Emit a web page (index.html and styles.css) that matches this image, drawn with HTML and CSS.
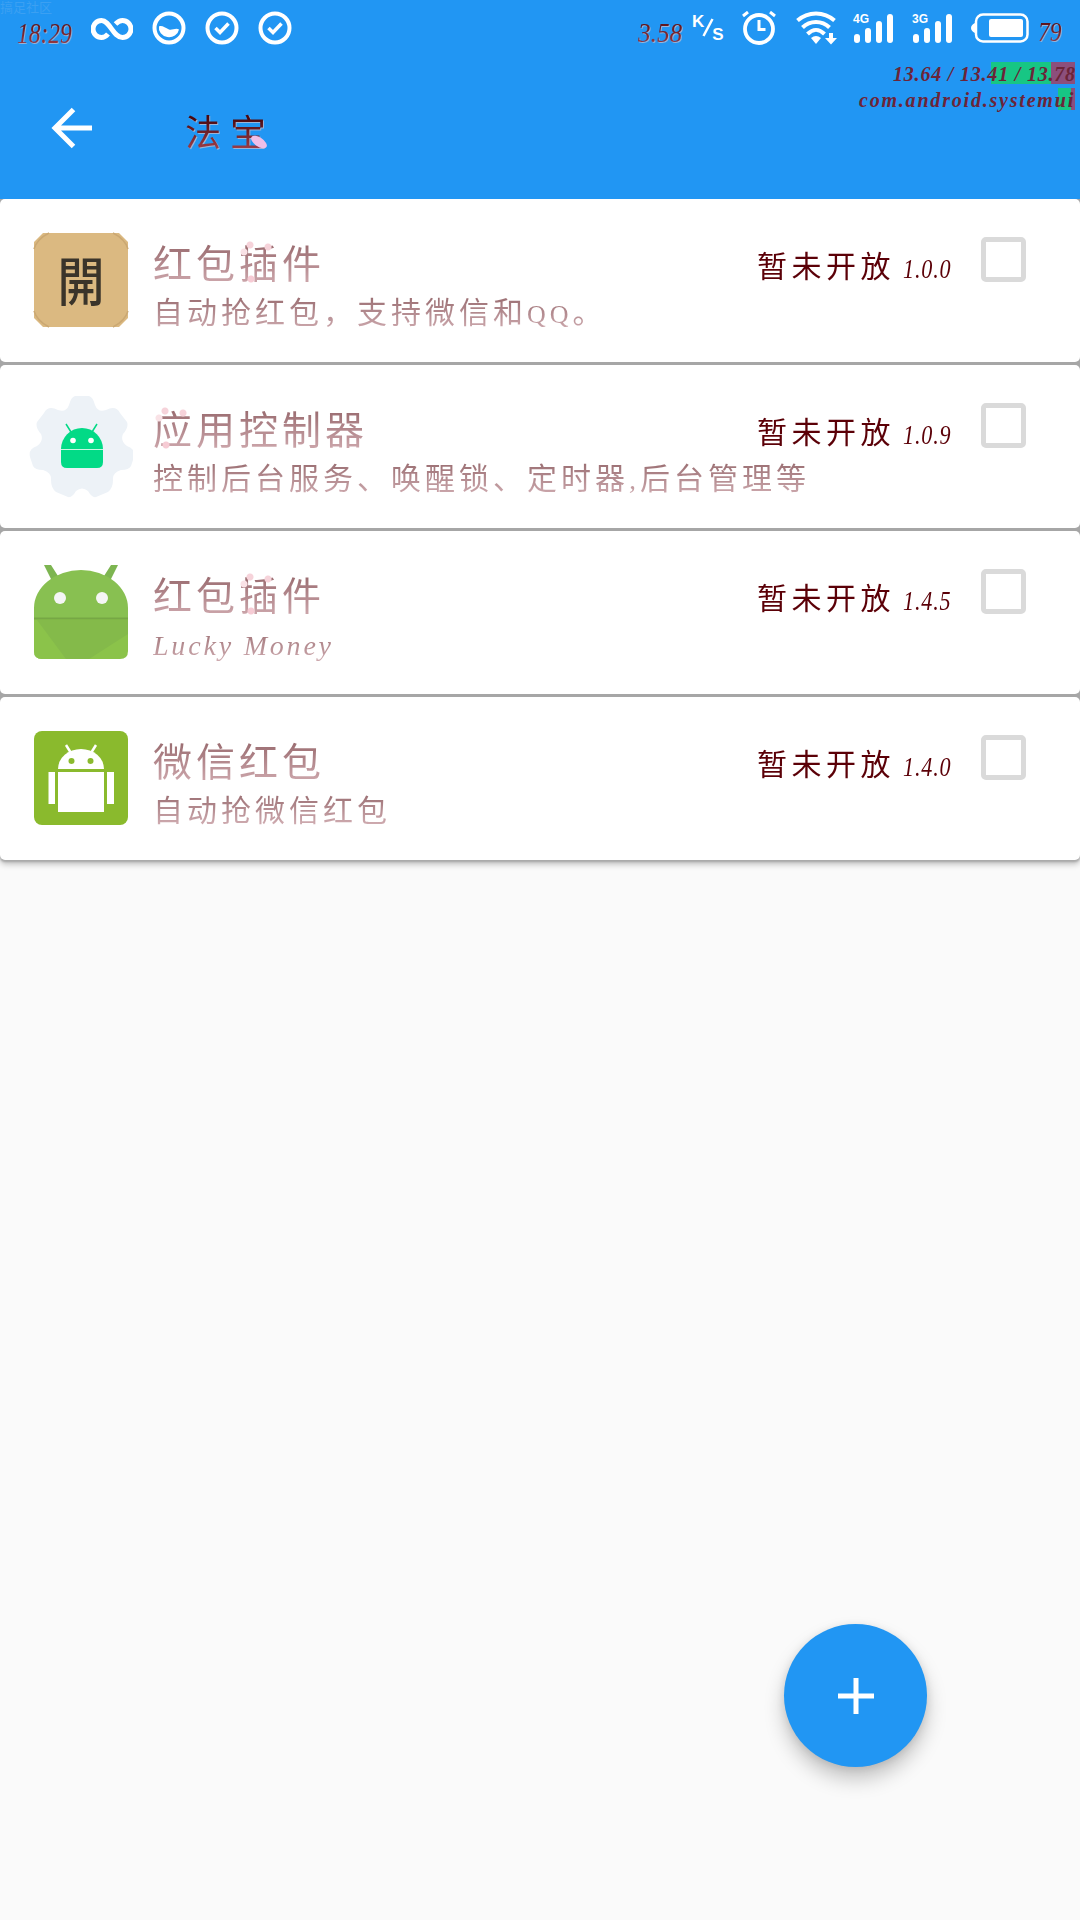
FILE: index.html
```html
<!DOCTYPE html>
<html lang="zh-CN">
<head>
<meta charset="utf-8">
<title>法宝</title>
<link rel="stylesheet" href="styles.css">
</head>
<body>
<div class="screen">
  <header class="header">
    <div class="watermark">搞足社区</div>
    <div class="status">
      <div class="status-left">
        <span class="ink time">18:29</span>
        <svg class="i-inf" width="42" height="24" viewBox="0 0 42 24"><path d="M17 17C14.500 20 12.500 20.500 10.500 20.500A8.500 8.500 0 0 1 10.500 3.500C19 3.500 22 20.500 31.500 20.500A8.500 8.500 0 0 0 31.500 3.500C29 3.500 27 4.500 24.500 7" fill="none" stroke="#fff" stroke-width="5"/></svg>
        <svg class="i-c1" width="34" height="34" viewBox="0 0 34 34"><circle cx="17" cy="17" r="14.500" fill="none" stroke="#fff" stroke-width="4"/><path d="M7 15.500C10 14 13 17 17 18.500C20 19.500 24 16.500 27 18.500A10 9 0 0 1 7 15.500Z" fill="#fff"/></svg>
        <svg class="i-c2" width="34" height="34" viewBox="0 0 34 34"><circle cx="17" cy="17" r="14.500" fill="none" stroke="#fff" stroke-width="4"/><path d="M10.500 17l4.500 4.500 8.500-9" fill="none" stroke="#fff" stroke-width="3.500"/></svg>
        <svg class="i-c2" width="34" height="34" viewBox="0 0 34 34"><circle cx="17" cy="17" r="14.500" fill="none" stroke="#fff" stroke-width="4"/><path d="M10.500 17l4.500 4.500 8.500-9" fill="none" stroke="#fff" stroke-width="3.500"/></svg>
      </div>
      <div class="status-right">
        <span class="ink speed">3.58</span>
        <span class="unit"><span>K</span><svg width="12" height="20" viewBox="0 0 12 20"><path d="M10.500 1L1.500 18" stroke="#fff" stroke-width="2.500"/></svg><span class="unit-s">S</span></span>
        <svg class="i-alarm" width="34" height="34" viewBox="0 0 34 34"><circle cx="17" cy="18" r="14" fill="none" stroke="#fff" stroke-width="3.800"/><path d="M17 9v9.500h6.500" fill="none" stroke="#fff" stroke-width="3"/><path d="M1 5L6 1M33 5L28 1" stroke="#fff" stroke-width="3"/></svg>
        <svg class="i-wifi" width="42" height="34" viewBox="0 0 42 34"><g fill="none" stroke="#fff" stroke-width="4"><path d="M1.500 9.500C12 0 28 0 38.500 9.500"/><path d="M6.500 16.500C14 9 26 9 33.500 16.500"/><path d="M11.500 23C17 17.500 23 17.500 28.500 23"/></g><path d="M15 27Q20 23 25 27L20 33Z" fill="#fff"/><path d="M33 22h4v5h4l-6 6.500-6-6.500h4z" fill="#fff"/></svg>
        <span class="cell"><svg width="42" height="32" viewBox="0 0 42 32"><g fill="#fff"><rect x="1" y="21" width="6" height="9" rx="3"/><rect x="12" y="15" width="6" height="15" rx="3"/><rect x="23" y="8" width="6" height="22" rx="3"/><rect x="34" y="1" width="6" height="29" rx="3"/></g></svg><b>4G</b></span>
        <span class="cell cell2"><svg width="42" height="32" viewBox="0 0 42 32"><g fill="#fff"><rect x="1" y="21" width="6" height="9" rx="3"/><rect x="12" y="15" width="6" height="15" rx="3"/><rect x="23" y="8" width="6" height="22" rx="3"/><rect x="34" y="1" width="6" height="29" rx="3"/></g></svg><b>3G</b></span>
        <svg class="i-bat" width="58" height="30" viewBox="0 0 58 30"><rect x="5" y="1.500" width="51.500" height="27" rx="7" fill="none" stroke="#fff" stroke-width="2.500"/><path d="M4 10Q0 12 0 15T4 20Z" fill="#fff"/><rect x="18" y="6" width="34" height="18" rx="2" fill="#fff"/></svg>
        <span class="ink pct">79</span>
      </div>
    </div>
    <div class="toolbar">
      <svg class="back" width="42" height="42" viewBox="0 0 42 42"><path d="M41 21H5M22.500 2.500L4 21L22.500 39.500" fill="none" stroke="#fff" stroke-width="5"/></svg>
      <h1 class="ink title">法宝</h1>
      <svg class="petal" width="18" height="16" viewBox="0 0 18 16"><ellipse cx="9" cy="8" rx="9" ry="4.500" transform="rotate(34 9 8)" fill="#eebee8"/></svg>
    </div>
    <div class="load">
      <div class="load-row load-a"><span>13.64 / 13.41 / 13.78</span></div>
      <div class="load-row load-b"><span>com.android.systemui</span></div>
    </div>
  </header>

  <main class="list">
    <article class="card">
      <svg class="icon" width="104" height="104" viewBox="0 0 104 104"><path d="M14 5H90L99 14V90L90 99H14L5 90V14Z" fill="#dbb981"/><path d="M5 21Q8 11 20 5M84 5Q96 11 99 21M5 83Q8 93 20 99M84 99Q96 93 99 83" fill="none" stroke="#cba872" stroke-width="1.500"/><text class="kai" transform="translate(52 73) scale(1 1.120)" text-anchor="middle">開</text></svg>
      <div class="info"><h2 class="petals p3">红包插件</h2><p>自动抢红包，支持微信和<i class="qq">QQ</i>。</p></div>
      <div class="state"><span>暂未开放</span><i>1.0.0</i></div>
      <span class="box"></span>
    </article>
    <article class="card">
      <svg class="icon" width="104" height="104" viewBox="0 0 104 104"><g transform="translate(1 2)"><path d="M45 0H59Q63 1 65 9Q68 17 76 14Q86 9 90 17L97 26Q99 31 93 38Q90 45 97 50Q106 53 104 61L101 70Q99 74 91 74Q82 77 83 84Q83 92 78 96L66 101Q62 102 58 95Q52 90 46 95Q42 102 38 101L26 96Q21 92 21 84Q22 77 13 74Q5 74 3 70L0 61Q-2 53 7 50Q14 45 11 38Q5 31 7 26L14 17Q18 9 28 14Q36 17 39 9Q41 1 45 0Z" fill="#edf2f7"/><path d="M31 53A21 21 0 0 1 73 53V66Q73 72 67 72H37Q31 72 31 66Z" fill="#02da86"/><path d="M36 28l5 8M67 28l-5 8" stroke="#02da86" stroke-width="1.500"/><path d="M31 53.500H73" stroke="#c8f7e2" stroke-width="1"/><circle cx="43" cy="44.500" r="2.800" fill="#fff"/><circle cx="61" cy="44.500" r="2.800" fill="#fff"/></g></svg>
      <div class="info"><h2 class="petals p1">应用控制器</h2><p>控制后台服务、唤醒锁、定时器<i class="comma">,</i>后台管理等</p></div>
      <div class="state"><span>暂未开放</span><i>1.0.9</i></div>
      <span class="box"></span>
    </article>
    <article class="card">
      <svg class="icon" width="104" height="104" viewBox="0 0 104 104"><path d="M15 5h7l7 11-5 7zM89 5h-7l-7 11 5 7z" fill="#7db551"/><path d="M5 48H99V91Q99 99 91 99H13Q5 99 5 91Z" fill="#8bc34a"/><path d="M5 58V48A47 38 0 0 1 99 48V58Z" fill="#88c051"/><path d="M5 58H10L38 99H13Q5 99 5 91Z" fill="#8bc34a"/><path d="M8 60H99V74L60 99H37Z" fill="#84ba4a"/><path d="M5 58.500H99" stroke="#76a745" stroke-width="2"/><circle cx="31" cy="38" r="6" fill="#f5f5f5"/><circle cx="73" cy="38" r="6" fill="#f5f5f5"/></svg>
      <div class="info"><h2 class="petals p3">红包插件</h2><p class="latin"><i>Lucky Money</i></p></div>
      <div class="state"><span>暂未开放</span><i>1.4.5</i></div>
      <span class="box"></span>
    </article>
    <article class="card">
      <svg class="icon" width="104" height="104" viewBox="0 0 104 104"><rect x="5" y="5" width="94" height="94" rx="8" fill="#8aba2d"/><path d="M29 43A23 20 0 0 1 75 43Z" fill="#fff"/><path d="M37 19l5 8M67 19l-5 8" stroke="#fff" stroke-width="2.500"/><circle cx="42.500" cy="35" r="3" fill="#8aba2d"/><circle cx="61.500" cy="35" r="3" fill="#8aba2d"/><path d="M29 46H75V86H29ZM19.500 46H26V78H19.500ZM78 46H85V78H78Z" fill="#fff"/></svg>
      <div class="info"><h2>微信红包</h2><p>自动抢微信红包</p></div>
      <div class="state"><span>暂未开放</span><i>1.4.0</i></div>
      <span class="box"></span>
    </article>
  </main>

  <button class="fab" aria-label="添加"><svg width="36" height="36" viewBox="0 0 36 36"><path d="M18 0V36M0 18H36" stroke="#fff" stroke-width="5"/></svg></button>
</div>
</body>
</html>
```
FILE: styles.css
```css
* { box-sizing: border-box; margin: 0; padding: 0; }

body {
  width: 1080px;
  height: 1920px;
  overflow: hidden;
  background: #fafafa;
  font-family: "Liberation Serif", "Noto Sans CJK SC", sans-serif;
}

svg { display: block; flex: none; }

.screen { position: relative; width: 1080px; height: 1920px; }

.header { position: relative; height: 199px; background: #2196f3; }

.watermark {
  position: absolute;
  left: 0;
  top: 0;
  font: 13px/13px "Noto Sans CJK SC", sans-serif;
  color: #3ba0f2;
}

.ink {
  color: transparent;
  background: linear-gradient(#4a0910 30%, #a8434e 90%);
  -webkit-background-clip: text;
  background-clip: text;
  filter: drop-shadow(1px 1px 0 #9bb4d8);
  white-space: nowrap;
}

.status { display: flex; justify-content: space-between; height: 56px; }
.status-left, .status-right { display: flex; }
.status-left { padding-left: 17px; }

.time { width: 74px; font: italic 30px/33px "Liberation Serif", serif; padding-top: 16px; transform: scaleX(.78); transform-origin: 0 0; }
.i-inf { margin-top: 17px; }
.i-c1 { margin: 11px 0 0 19px; }
.i-c2 { margin: 11px 0 0 19px; }

.status-right { width: 442px; }
.speed { width: 51px; font: italic 28px/33px "Liberation Serif", serif; padding-top: 16px; transform: scaleX(.9); transform-origin: 0 0; }
.unit { display: flex; width: 36px; margin-left: 3px; color: #fff; font: bold 17px/17px "Liberation Sans", sans-serif; padding-top: 13px; }
.unit svg { margin: 5px -2px 0 -2px; }
.unit-s { margin-top: 13px; }
.i-alarm { margin: 11px 0 0 14px; }
.i-wifi { margin: 11px 0 0 20px; }
.cell { position: relative; margin: 13px 0 0 15px; }
.cell2 { margin-left: 17px; }
.cell b { position: absolute; left: 0; top: 0; color: #fff; font: bold 12px/13px "Liberation Sans", sans-serif; }
.i-bat { margin: 13px 0 0 17px; }
.pct { font: italic 28px/33px "Liberation Serif", serif; padding: 15px 3px 0 0; margin-left: 9px; transform: scaleX(.84); transform-origin: 0 0; }

.toolbar { display: flex; padding-left: 51px; }
.back { margin-top: 51px; }
.title { margin: 46px 0 0 92px; font: 36px/56px "Noto Sans CJK SC", sans-serif; letter-spacing: 9px; }
.petal { margin: 78px 0 0 -25px; z-index: 1; }

.load {
  position: absolute;
  right: 5px;
  top: 62px;
  display: flex;
  flex-direction: column;
  align-items: flex-end;
  gap: 4px;
  color: #6c2438;
  font: italic bold 20px/24px "Liberation Serif", serif;
  white-space: nowrap;
}
.load-row { height: 22px; text-align: right; }
.load-a { width: 182px; background: linear-gradient(90deg, transparent 98px, #17c684 98px, #17c684 158px, #8c4f7c 158px); letter-spacing: .8px; }
.load-b { width: 218px; background: linear-gradient(90deg, transparent 201px, #17c684 201px, #17c684 214px, #8c4f7c 214px); letter-spacing: 1.800px; }

.list { display: flex; flex-direction: column; gap: 3px; background: #a6a6a6; box-shadow: 0 2px 2px #aaa, 0 4px 6px rgba(0, 0, 0, .25); border-radius: 0 0 5px 5px; }

.card {
  display: flex;
  height: 163px;
  padding-left: 29px;
  border-radius: 5px;
  background: #fff;
}

.icon { margin-top: 29px; }
.kai { font: 500 47px "Noto Sans CJK TC", sans-serif; fill: #3a342a; }

.info { width: 600px; margin-left: 20px; padding-top: 34px; white-space: nowrap; }
.info h2, .info p, .state span, .state i {
  color: transparent;
  -webkit-background-clip: text;
  background-clip: text;
}
.info h2 {
  width: max-content;
  font: 400 39px/56px "Noto Sans CJK SC", sans-serif;
  letter-spacing: 4px;
  background-image: linear-gradient(#9a6c70 20%, #c9a2a7 85%);
}
.info p {
  width: max-content;
  margin-top: -1px;
  font: 400 30px/44px "Noto Sans CJK SC", sans-serif;
  letter-spacing: 4px;
  background-image: linear-gradient(#9c7074 20%, #cda9ae 85%);
}
.info p i { font-family: "Liberation Serif", serif; font-size: 28px; }
.info .qq { font-style: normal; font-size: 26px; }
.info .comma { letter-spacing: 4px; }
.info .latin i { font-size: 28px; letter-spacing: 2.800px; }

.petals { position: relative; }
.petals::after {
  content: "";
  position: absolute;
  top: 7px;
  width: 34px;
  height: 44px;
  background:
    radial-gradient(circle at 10px 5px, #f6d3da 3px, transparent 4px),
    radial-gradient(circle at 28px 7px, #f6d3da 3px, transparent 4px),
    radial-gradient(circle at 4px 12px, #f9e2e6 3px, transparent 4px),
    radial-gradient(circle at 11px 39px, #f6cbd4 3px, transparent 4px);
}
.p3::after { left: 87px; }
.p1::after { left: 2px; }

.state { display: flex; width: 198px; justify-content: flex-end; white-space: nowrap; padding-top: 43px; }
.state span {
  font: 30px/44px "Noto Sans CJK SC", sans-serif;
  letter-spacing: 4.500px;
  background-image: linear-gradient(#5b0007 30%, #94505c 85%);
}
.state i {
  width: 60px;
  margin: 0 -12px 0 8px;
  font: italic 27px/54px "Liberation Serif", serif;
  letter-spacing: 1px;
  transform: scaleX(.82);
  transform-origin: 0 0;
  background-image: linear-gradient(#5b0007 30%, #94505c 75%);
}

.box { width: 45px; height: 45px; margin: 38px 0 0 30px; border: 5px solid #dadada; border-radius: 5px; }

.fab {
  position: absolute;
  left: 784px;
  top: 1624px;
  display: flex;
  align-items: center;
  justify-content: center;
  width: 143px;
  height: 143px;
  border: 0;
  border-radius: 50%;
  background: #2196f3;
  box-shadow: 0 12px 20px rgba(0, 0, 0, .22), 0 2px 8px rgba(0, 0, 0, .1);
}
```
